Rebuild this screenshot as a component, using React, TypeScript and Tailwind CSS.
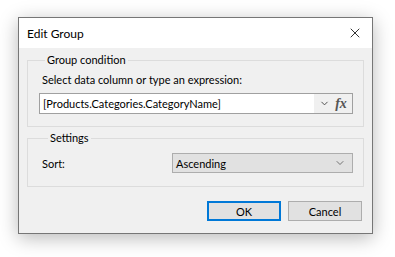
import { X, ChevronDown } from "lucide-react";

const font = { fontFamily: 'Lato, "Liberation Sans", sans-serif' };

export default function App() {
  return (
    <div className="w-[395px] h-[257px] bg-white pl-[18px] pt-[17px] text-[11px] text-black" style={font}>
      <div className="w-[355px] h-[217px] border border-[#767676] bg-[#f0f0f0] flex flex-col shadow-[0_4px_18px_rgba(0,0,0,0.28)]">
        {/* title bar */}
        <div className="h-[30px] bg-white flex items-center justify-between pl-[8px] pr-[9px]">
          <span className="leading-none pt-[1px] text-[12px]">Edit Group</span>
          <X size={16} strokeWidth={1.2} className="text-black" />
        </div>

        <div className="flex-1 flex flex-col px-[8px] pt-[4px]">
          <fieldset className="border border-[#dcdcdc] pl-[11px] pr-[10px] pb-[12px]">
            <legend className="ml-[6px] px-[2px] leading-[16px]">Group condition</legend>
            <div className="leading-[16px] mt-[4px] pl-[3px]">Select data column or type an expression:</div>
            <div className="mt-[5px] h-[21px] border border-[#a0a0a0] bg-white flex items-stretch">
              <div className="flex-1 flex items-center pl-[3px] leading-none">[Products.Categories.CategoryName]</div>
              <div className="w-[38px] bg-[#f0f0f0] flex items-center justify-center gap-[5px]">
                <ChevronDown size={11} strokeWidth={2} className="text-[#444]" />
                <span className="italic font-bold text-[#555] text-[14px] leading-none" style={{ fontFamily: '"Liberation Serif", serif' }}>fx</span>
              </div>
            </div>
          </fieldset>

          <fieldset className="border border-[#dcdcdc] mt-[3px] pl-[14px] pr-[10px] pb-[13px]">
            <legend className="ml-[6px] px-[2px] leading-[16px]">Settings</legend>
            <div className="mt-[7px] flex items-center">
              <span className="w-[130px] leading-none">Sort:</span>
              <div className="flex-1 h-[20px] border border-[#adadad] bg-[#e1e1e1] flex items-center justify-between pl-[3px] pr-[6px]">
                <span className="leading-none">Ascending</span>
                <ChevronDown size={12} strokeWidth={1.4} className="text-[#444]" />
              </div>
            </div>
          </fieldset>

          <div className="mt-[14px] flex justify-end gap-[7px] pr-[2px]">
            <button className="w-[74px] h-[20px] border-2 border-[#0078d7] bg-[#e1e1e1] leading-none">OK</button>
            <button className="w-[74px] h-[20px] border border-[#adadad] bg-[#e1e1e1] leading-none">Cancel</button>
          </div>
        </div>
      </div>
    </div>
  );
}
